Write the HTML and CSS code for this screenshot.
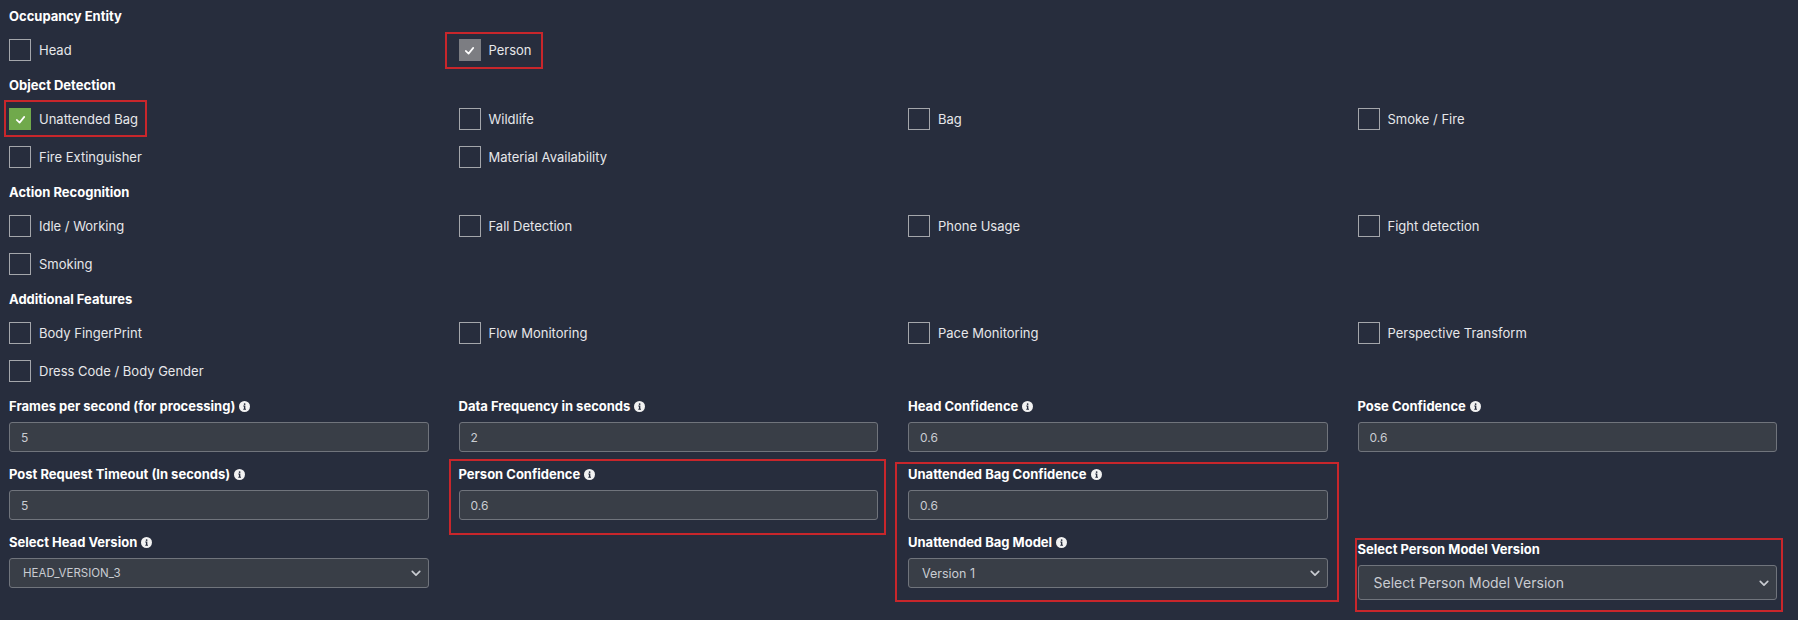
FILE: index.html
```html
<!DOCTYPE html>
<html lang="en">
<head>
    <meta charset="UTF-8">
    <title>Camera Settings</title>
    <link rel="stylesheet" href="styles.css">
</head>
<body>
    <div class="settings">
        <div class="section-title">Occupancy Entity</div>
        <div class="check-grid">
            <label class="check"><span class="box"></span>Head</label>
            <label class="check hl hl-person"><span class="box checked gray"><svg viewBox="0 0 16 16"><polyline points="4,8.5 7,11.3 12,5.2"/></svg></span>Person</label>
        </div>

        <div class="section-title">Object Detection</div>
        <div class="check-grid">
            <label class="check hl hl-bag"><span class="box checked green"><svg viewBox="0 0 16 16"><polyline points="4,8.5 7,11.3 12,5.2"/></svg></span>Unattended Bag</label>
            <label class="check"><span class="box"></span>Wildlife</label>
            <label class="check"><span class="box"></span>Bag</label>
            <label class="check"><span class="box"></span>Smoke / Fire</label>
            <label class="check"><span class="box"></span>Fire Extinguisher</label>
            <label class="check"><span class="box"></span>Material Availability</label>
        </div>

        <div class="section-title">Action Recognition</div>
        <div class="check-grid">
            <label class="check"><span class="box"></span>Idle / Working</label>
            <label class="check"><span class="box"></span>Fall Detection</label>
            <label class="check"><span class="box"></span>Phone Usage</label>
            <label class="check"><span class="box"></span>Fight detection</label>
            <label class="check"><span class="box"></span>Smoking</label>
        </div>

        <div class="section-title">Additional Features</div>
        <div class="check-grid">
            <label class="check"><span class="box"></span>Body FingerPrint</label>
            <label class="check"><span class="box"></span>Flow Monitoring</label>
            <label class="check"><span class="box"></span>Pace Monitoring</label>
            <label class="check"><span class="box"></span>Perspective Transform</label>
            <label class="check"><span class="box"></span>Dress Code / Body Gender</label>
        </div>

        <div class="fields">
            <div class="field-col">
                <div class="field">
                    <div class="field-label">Frames per second (for processing) <svg class="info" viewBox="0 0 16 16"><circle cx="8" cy="8" r="8"/><circle class="i" cx="8.2" cy="4.4" r="1.3"/><path class="i" d="M6.2 6.6h3v4.6h1v1.4H6.2v-1.4h1v-3.2h-1z"/></svg></div>
                    <input class="input" type="text" value="5">
                </div>
                <div class="field">
                    <div class="field-label">Post Request Timeout (In seconds) <svg class="info" viewBox="0 0 16 16"><circle cx="8" cy="8" r="8"/><circle class="i" cx="8.2" cy="4.4" r="1.3"/><path class="i" d="M6.2 6.6h3v4.6h1v1.4H6.2v-1.4h1v-3.2h-1z"/></svg></div>
                    <input class="input" type="text" value="5">
                </div>
                <div class="field">
                    <div class="field-label">Select Head Version <svg class="info" viewBox="0 0 16 16"><circle cx="8" cy="8" r="8"/><circle class="i" cx="8.2" cy="4.4" r="1.3"/><path class="i" d="M6.2 6.6h3v4.6h1v1.4H6.2v-1.4h1v-3.2h-1z"/></svg></div>
                    <div class="select-wrap">
                        <select class="select small"><option>HEAD_VERSION_3</option></select>
                        <svg class="chevron" viewBox="0 0 12 8"><polyline points="1.5,1.5 6,6 10.5,1.5"/></svg>
                    </div>
                </div>
            </div>

            <div class="field-col">
                <div class="field">
                    <div class="field-label">Data Frequency in seconds <svg class="info" viewBox="0 0 16 16"><circle cx="8" cy="8" r="8"/><circle class="i" cx="8.2" cy="4.4" r="1.3"/><path class="i" d="M6.2 6.6h3v4.6h1v1.4H6.2v-1.4h1v-3.2h-1z"/></svg></div>
                    <input class="input" type="text" value="2">
                </div>
                <div class="field hl hl-pconf">
                    <div class="field-label">Person Confidence <svg class="info" viewBox="0 0 16 16"><circle cx="8" cy="8" r="8"/><circle class="i" cx="8.2" cy="4.4" r="1.3"/><path class="i" d="M6.2 6.6h3v4.6h1v1.4H6.2v-1.4h1v-3.2h-1z"/></svg></div>
                    <input class="input" type="text" value="0.6">
                </div>
            </div>

            <div class="field-col">
                <div class="field">
                    <div class="field-label">Head Confidence <svg class="info" viewBox="0 0 16 16"><circle cx="8" cy="8" r="8"/><circle class="i" cx="8.2" cy="4.4" r="1.3"/><path class="i" d="M6.2 6.6h3v4.6h1v1.4H6.2v-1.4h1v-3.2h-1z"/></svg></div>
                    <input class="input" type="text" value="0.6">
                </div>
                <div class="field-group hl hl-ubag">
                    <div class="field">
                        <div class="field-label">Unattended Bag Confidence <svg class="info" viewBox="0 0 16 16"><circle cx="8" cy="8" r="8"/><circle class="i" cx="8.2" cy="4.4" r="1.3"/><path class="i" d="M6.2 6.6h3v4.6h1v1.4H6.2v-1.4h1v-3.2h-1z"/></svg></div>
                        <input class="input" type="text" value="0.6">
                    </div>
                    <div class="field">
                        <div class="field-label">Unattended Bag Model <svg class="info" viewBox="0 0 16 16"><circle cx="8" cy="8" r="8"/><circle class="i" cx="8.2" cy="4.4" r="1.3"/><path class="i" d="M6.2 6.6h3v4.6h1v1.4H6.2v-1.4h1v-3.2h-1z"/></svg></div>
                        <div class="select-wrap">
                            <select class="select"><option>Version 1</option></select>
                            <svg class="chevron" viewBox="0 0 12 8"><polyline points="1.5,1.5 6,6 10.5,1.5"/></svg>
                        </div>
                    </div>
                </div>
            </div>

            <div class="field-col">
                <div class="field">
                    <div class="field-label">Pose Confidence <svg class="info" viewBox="0 0 16 16"><circle cx="8" cy="8" r="8"/><circle class="i" cx="8.2" cy="4.4" r="1.3"/><path class="i" d="M6.2 6.6h3v4.6h1v1.4H6.2v-1.4h1v-3.2h-1z"/></svg></div>
                    <input class="input" type="text" value="0.6">
                </div>
                <div class="field person-model hl hl-pmodel">
                    <div class="field-label">Select Person Model Version</div>
                    <div class="select-wrap">
                        <select class="select large"><option>Select Person Model Version</option></select>
                        <svg class="chevron" viewBox="0 0 12 8"><polyline points="1.5,1.5 6,6 10.5,1.5"/></svg>
                    </div>
                </div>
            </div>
        </div>
    </div>
</body>
</html>
```

FILE: styles.css
```css
* {
    box-sizing: border-box;
}
html, body {
    margin: 0;
    height: 100%;
    background: #272d3d;
}
body {
    font-family: Inter, 'Liberation Sans', sans-serif;
    color: #e8e8ea;
    overflow: hidden;
}
.settings {
    padding: 8px 21px 0 9px;
}
.section-title {
    font-size: 13px;
    font-weight: 700;
    line-height: 16px;
    color: #fff;
    margin-bottom: 15px;
}
.check-grid {
    display: grid;
    grid-template-columns: repeat(4, 1fr);
    column-gap: 30px;
    row-gap: 16px;
    margin-bottom: 16px;
}
.check {
    display: inline-flex;
    align-items: center;
    justify-self: start;
    height: 22px;
    font-size: 13px;
    color: #e6e7ea;
}
.box {
    width: 22px;
    height: 22px;
    border: 1px solid #a4a6ab;
    margin-right: 8px;
    display: flex;
    align-items: center;
    justify-content: center;
}
.box svg {
    width: 15px;
    height: 15px;
    fill: none;
    stroke: #fff;
    stroke-width: 1.8;
    stroke-linecap: round;
    stroke-linejoin: round;
}
.box.gray {
    background: #7c7d82;
    border-color: #7c7d82;
}
.box.green {
    background: #70a94b;
    border-color: #70a94b;
}

/* red highlight frames */
.hl {
    position: relative;
}
.hl::after {
    content: '';
    position: absolute;
    border: 2px solid #c8262b;
    pointer-events: none;
}
.hl-person::after { inset: -7px -11px -8px -14px; }
.hl-bag::after { inset: -8px -9px -7px -5px; }
.hl-pconf::after { inset: -7px -8px -15px -10px; }
.hl-ubag::after { inset: -4px -11px -14px -13px; }
.hl-pmodel::after { inset: -3px -6px -12px -3px; }

.fields {
    display: grid;
    grid-template-columns: repeat(4, 1fr);
    column-gap: 30px;
}
.field-col, .field-group {
    display: flex;
    flex-direction: column;
    gap: 14px;
}
.field-label {
    display: flex;
    align-items: center;
    gap: 4px;
    font-size: 13px;
    font-weight: 700;
    line-height: 16px;
    color: #fff;
    margin-bottom: 8px;
}
.info {
    width: 11px;
    height: 11px;
    fill: #f2f2f2;
}
.info .i {
    fill: #272d3d;
}
.input, .select {
    width: 100%;
    height: 30px;
    background: #393e47;
    border: 1px solid #70747c;
    border-radius: 3px;
    color: #c9ccd2;
    font-family: Inter, 'Liberation Sans', sans-serif;
    font-size: 12px;
    padding: 0 11px;
    outline: none;
}
.select {
    appearance: none;
    -webkit-appearance: none;
    padding-left: 13px;
    font-size: 12.5px;
}
.select.small {
    font-size: 11.5px;
}
.select.large {
    height: 35px;
    font-size: 14px;
    padding-left: 15px;
}
.select-wrap {
    position: relative;
}
.chevron {
    position: absolute;
    right: 8px;
    top: 50%;
    width: 10px;
    height: 7px;
    margin-top: -3px;
    fill: none;
    stroke: #c9ccd2;
    stroke-width: 2;
    stroke-linecap: round;
    stroke-linejoin: round;
}
.person-model {
    margin-top: 75px;
}
```
